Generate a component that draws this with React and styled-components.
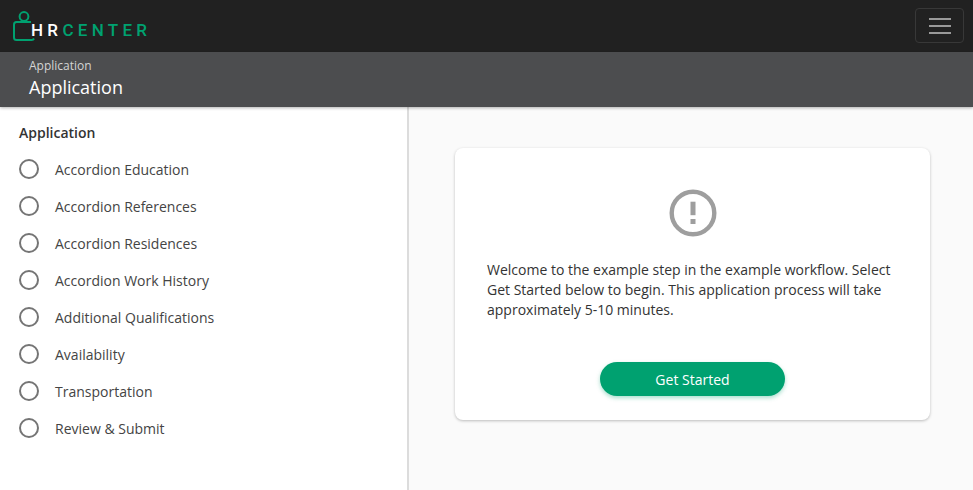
import styled, { createGlobalStyle } from "styled-components";

const GlobalStyle = createGlobalStyle`
    html, body {
        margin: 0;
        padding: 0;
        background: #fff;
    }
    body {
        font-family: "Open Sans", "Liberation Sans", sans-serif;
        color: #333;
    }
`;

const Page = styled.div`
    display: flex;
    flex-direction: column;
    height: 490px;
    overflow: hidden;
`;

const TopBar = styled.header`
    height: 52px;
    flex-shrink: 0;
    background: #212121;
    display: flex;
    align-items: center;
    justify-content: space-between;
    padding: 0 9px 0 12px;
`;

const Logo = styled.div`
    display: flex;
    align-items: center;
    height: 52px;
`;

const LogoMark = styled.svg`
    width: 24px;
    height: 32px;
    margin-top: -1px;
    display: block;
`;

const LogoText = styled.div`
    font-family: "Roboto", "Liberation Sans", sans-serif;
    font-size: 17px;
    font-weight: 500;
    letter-spacing: 4.3px;
    line-height: 1;
    margin: 9px 0 0 -5px;
    color: #00a170;

    span {
        color: #fff;
    }
`;

const MenuButton = styled.button`
    width: 49px;
    height: 35px;
    box-sizing: border-box;
    background: transparent;
    border: 1px solid #383838;
    border-radius: 4px;
    padding: 0;
    margin-top: -1px;
    display: flex;
    flex-direction: column;
    align-items: center;
    justify-content: center;
    gap: 5px;
`;

const MenuLine = styled.span`
    display: block;
    width: 22px;
    height: 2px;
    background: #999;
`;

const Band = styled.div`
    height: 55px;
    flex-shrink: 0;
    box-sizing: border-box;
    background: #4c4d4f;
    padding: 6px 29px 0;
    box-shadow: 0 1px 3px rgba(0, 0, 0, 0.3);
    position: relative;
    z-index: 1;
`;

const Crumb = styled.div`
    font-size: 12px;
    line-height: 16px;
    color: #d4d4d4;
`;

const BandTitle = styled.h1`
    margin: 1px 0 0;
    font-size: 18px;
    font-weight: 400;
    line-height: 24px;
    color: #fff;
`;

const Body = styled.div`
    flex: 1;
    display: flex;
    min-height: 0;
`;

const Sidebar = styled.aside`
    width: 409px;
    flex-shrink: 0;
    box-sizing: border-box;
    background: #fff;
    border-right: 2px solid #dcdcdc;
    padding: 16px 19px 0;
`;

const SideTitle = styled.h2`
    margin: 0 0 8px;
    font-size: 14px;
    font-weight: 600;
    line-height: 20px;
    color: #333;
`;

const Steps = styled.ul`
    list-style: none;
    margin: 0;
    padding: 0;
`;

const Step = styled.li`
    display: flex;
    align-items: center;
    height: 37px;
    font-size: 14px;
    color: #444;
`;

const StepCircle = styled.span`
    width: 20px;
    height: 20px;
    box-sizing: border-box;
    border: 2px solid #757575;
    border-radius: 50%;
    margin: 0 16px 2px 0;
    flex-shrink: 0;
`;

const Main = styled.main`
    flex: 1;
    background: #fafafa;
    padding: 41px 43px 0 46px;
`;

const Card = styled.section`
    height: 272px;
    box-sizing: border-box;
    background: #fff;
    border-radius: 8px;
    box-shadow: 0 1px 3px rgba(0, 0, 0, 0.25);
    padding: 40px 32px 0;
    display: flex;
    flex-direction: column;
`;

const AlertIcon = styled.svg`
    width: 50px;
    height: 50px;
    display: block;
    align-self: center;
    flex-shrink: 0;
`;

const Message = styled.p`
    margin: 22px 0 0;
    font-size: 14px;
    line-height: 20px;
    color: #333;
`;

const StartButton = styled.button`
    align-self: center;
    margin: 42px 0 0;
    width: 185px;
    height: 34px;
    border: none;
    border-radius: 17px;
    background: #00a170;
    color: #fff;
    font-family: inherit;
    font-size: 14px;
    font-weight: 400;
    box-shadow: 0 2px 4px rgba(0, 161, 112, 0.35);
`;

const steps = [
    "Accordion Education",
    "Accordion References",
    "Accordion Residences",
    "Accordion Work History",
    "Additional Qualifications",
    "Availability",
    "Transportation",
    "Review & Submit",
];

const App = () => {
    return (
        <Page>
            <GlobalStyle />
            <TopBar>
                <Logo>
                    <LogoMark viewBox="0 0 24 32" fill="none" stroke="#00a170" strokeWidth="2">
                        <circle cx="12" cy="6.5" r="4.4" />
                        <path d="M19 12H4.5A2.5 2.5 0 0 0 2 14.5V27.5A2.5 2.5 0 0 0 4.5 30H19.5A2.5 2.5 0 0 0 22 28.5" />
                    </LogoMark>
                    <LogoText>
                        <span>HR</span>CENTER
                    </LogoText>
                </Logo>
                <MenuButton aria-label="Menu">
                    <MenuLine />
                    <MenuLine />
                    <MenuLine />
                </MenuButton>
            </TopBar>
            <Band>
                <Crumb>Application</Crumb>
                <BandTitle>Application</BandTitle>
            </Band>
            <Body>
                <Sidebar>
                    <SideTitle>Application</SideTitle>
                    <Steps>
                        {steps.map((step) => (
                            <Step key={step}>
                                <StepCircle />
                                {step}
                            </Step>
                        ))}
                    </Steps>
                </Sidebar>
                <Main>
                    <Card>
                        <AlertIcon viewBox="0 0 50 50" fill="none">
                            <circle cx="25" cy="25" r="21.3" stroke="#9e9e9e" strokeWidth="4.4" />
                            <rect x="22.5" y="13.7" width="5" height="13.5" fill="#9e9e9e" />
                            <rect x="22.5" y="31" width="5" height="5" fill="#9e9e9e" />
                        </AlertIcon>
                        <Message>
                            Welcome to the example step in the example workflow. Select Get Started below to begin. This application process will take approximately 5-10 minutes.
                        </Message>
                        <StartButton>Get Started</StartButton>
                    </Card>
                </Main>
            </Body>
        </Page>
    );
};

export default App;
